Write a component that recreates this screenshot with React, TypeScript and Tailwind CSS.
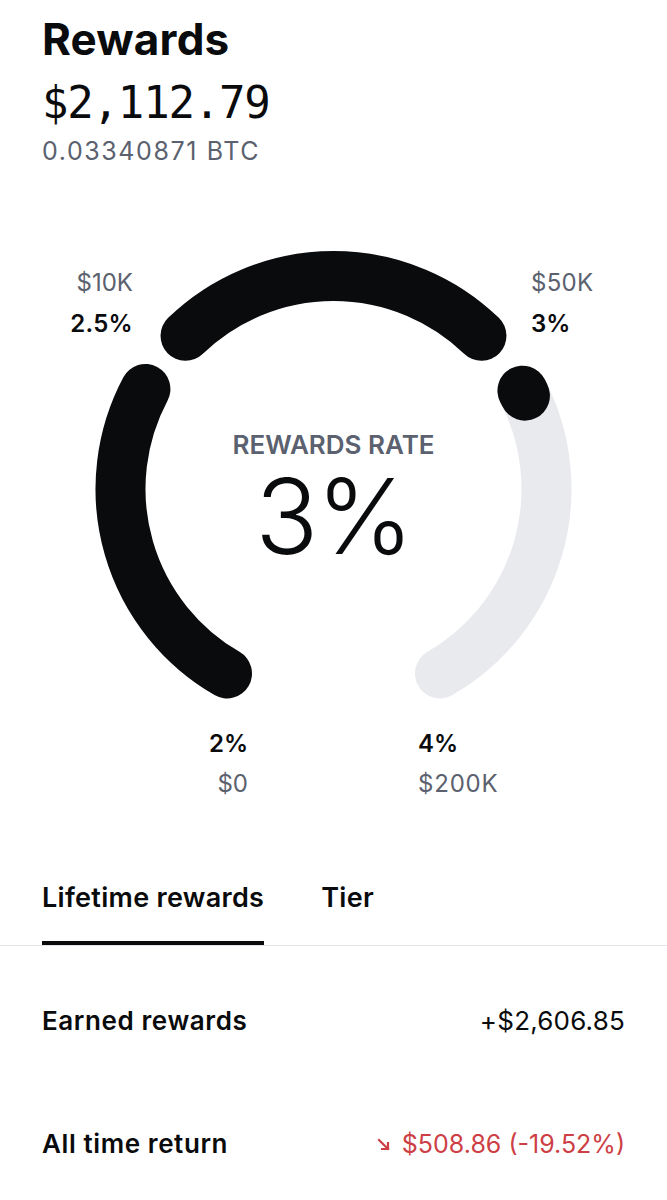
import React from "react";

const cx = 333.5;
const cy = 489;
const r = 213;

function pt(deg: number) {
  const rad = (deg * Math.PI) / 180;
  return [cx + r * Math.sin(rad), cy - r * Math.cos(rad)];
}

function arc(a0: number, a1: number) {
  const [x0, y0] = pt(a0);
  const [x1, y1] = pt(a1);
  const large = a1 - a0 > 180 ? 1 : 0;
  return `M ${x0} ${y0} A ${r} ${r} 0 ${large} 1 ${x1} ${y1}`;
}

const TOP = 165;

function Gauge() {
  return (
    <div className="relative h-[717px]">
      <svg
        className="absolute left-0 top-0"
        width={667}
        height={717}
        viewBox={`0 ${TOP} 667 717`}
      >
        <path d={arc(63, 150)} stroke="#e9eaee" strokeWidth={50} fill="none" strokeLinecap="round" />
        <path d={arc(-150, -62)} stroke="#0a0b0d" strokeWidth={50} fill="none" strokeLinecap="round" />
        <path d={arc(-44, 44)} stroke="#0a0b0d" strokeWidth={50} fill="none" strokeLinecap="round" />
        <path d={arc(62.5, 64)} stroke="#0a0b0d" strokeWidth={50} fill="none" strokeLinecap="round" />
      </svg>

      {/* tier labels */}
      <div className="absolute right-[534px] top-[104px] text-[24px] leading-[28px] text-[#5b616e] text-right">$10K</div>
      <div className="absolute right-[534px] top-[145px] text-[24px] leading-[28px] font-semibold text-[#0a0b0d] text-right tracking-[0.3px]">2.5%</div>
      <div className="absolute left-[531px] top-[104px] text-[24px] leading-[28px] text-[#5b616e] tracking-[0.3px]">$50K</div>
      <div className="absolute left-[531px] top-[145px] text-[24px] leading-[28px] font-semibold text-[#0a0b0d]">3%</div>
      <div className="absolute right-[419px] top-[565px] text-[24px] leading-[28px] font-semibold text-[#0a0b0d] text-right">2%</div>
      <div className="absolute right-[419px] top-[605px] text-[24px] leading-[28px] text-[#5b616e] text-right">$0</div>
      <div className="absolute left-[418px] top-[565px] text-[24px] leading-[28px] font-semibold text-[#0a0b0d]">4%</div>
      <div className="absolute left-[418px] top-[605px] text-[24px] leading-[28px] text-[#5b616e] tracking-[0.8px]">$200K</div>

      {/* center */}
      <div className="absolute left-0 right-0 top-[264px] flex flex-col items-center">
        <div className="text-[26px] leading-[32px] font-semibold text-[#5b616e]">REWARDS RATE</div>
        <div className="mt-[10px] text-[104px] leading-[90px] font-light tracking-[-2px] text-[#0a0b0d]">3%</div>
      </div>
    </div>
  );
}

function ArrowDownRight() {
  return (
    <svg width="16" height="16" viewBox="0 0 16 16" className="mr-[10px]">
      <path d="M3 4 L12 13" stroke="#cd3f45" strokeWidth={2.2} strokeLinecap="square" />
      <path d="M5 13 H12 V6" stroke="#cd3f45" strokeWidth={2.2} fill="none" />
    </svg>
  );
}

export default function App() {
  return (
    <div className="w-[667px] min-h-[1200px] bg-white font-['Inter',sans-serif] text-[#0a0b0d]">
      <div className="px-[42px] pt-[13px]">
        <h1 className="text-[44px] leading-[52px] font-bold tracking-[0.2px]">Rewards</h1>
        <div className="mt-[14px] font-['DejaVu_Sans_Mono',monospace] text-[44px] leading-[48px] tracking-[-1.2px]">
          $2,112.79
        </div>
        <div className="mt-[10px] text-[25px] leading-[28px] text-[#5b616e] tracking-[1.6px]">0.03340871 BTC</div>
      </div>

      <Gauge />

      {/* tabs */}
      <div className="flex gap-[57px] px-[42px]">
        <div className="flex flex-col">
          <div className="text-[27px] leading-[32px] font-semibold tracking-[0.3px]">Lifetime rewards</div>
          <div className="mt-[27px] h-[4px] bg-[#0a0b0d]" />
        </div>
        <div className="text-[27px] leading-[32px] font-semibold tracking-[0.3px]">Tier</div>
      </div>
      <div className="h-px bg-[#e3e4e8]" />

      <div className="px-[42px]">
        <div className="mt-[59px] flex items-center justify-between">
          <div className="text-[26px] leading-[32px] font-semibold tracking-[0.6px]">Earned rewards</div>
          <div className="text-[26px] leading-[32px] tracking-[0.2px]">+$2,606.85</div>
        </div>
        <div className="mt-[91px] flex items-center justify-between">
          <div className="text-[26px] leading-[32px] font-semibold tracking-[0.6px]">All time return</div>
          <div className="flex items-center text-[25px] leading-[32px] text-[#cd3f45]">
            <ArrowDownRight />
            $508.86 (-19.52%)
          </div>
        </div>
      </div>
    </div>
  );
}
